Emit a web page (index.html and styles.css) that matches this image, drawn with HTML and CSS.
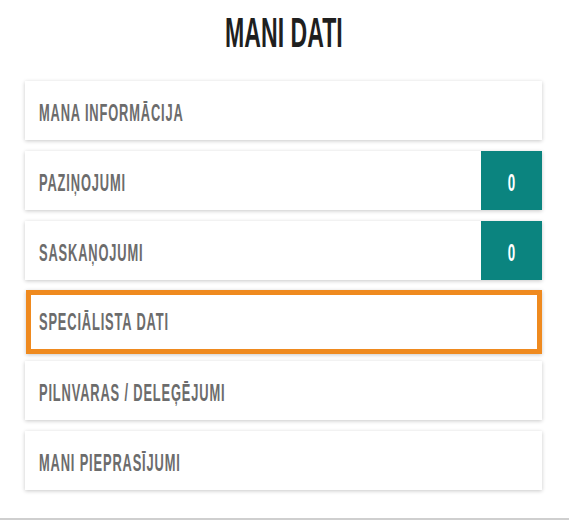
FILE: index.html
```html
<!DOCTYPE html>
<html lang="lv">
<head>
<meta charset="utf-8">
<title>Mani dati</title>
<link rel="stylesheet" href="styles.css">
</head>
<body>
<div class="page">
  <h1 class="title"><span class="squeeze">MANI DATI</span></h1>
  <ul class="menu">
    <li class="card"><span class="label"><span class="squeeze">MANA INFORMĀCIJA</span></span></li>
    <li class="card"><span class="label"><span class="squeeze">PAZIŅOJUMI</span></span><span class="badge"><span class="squeeze">0</span></span></li>
    <li class="card"><span class="label"><span class="squeeze">SASKAŅOJUMI</span></span><span class="badge"><span class="squeeze">0</span></span></li>
    <li class="card card-active"><span class="label"><span class="squeeze">SPECIĀLISTA DATI</span></span></li>
    <li class="card"><span class="label"><span class="squeeze">PILNVARAS / DELEĢĒJUMI</span></span></li>
    <li class="card"><span class="label"><span class="squeeze">MANI PIEPRASĪJUMI</span></span></li>
  </ul>
</div>
</body>
</html>
```

FILE: styles.css
```css
html, body {
  margin: 0;
  padding: 0;
  background: #fff;
}
body {
  font-family: "Liberation Sans Narrow", "Liberation Sans", "DejaVu Sans Condensed", sans-serif;
  font-weight: bold;
  height: 520px;
  box-sizing: border-box;
  border-bottom: 2px solid #cfcfcf;
  overflow: hidden;
}
.page {
  padding: 0 27px 0 25px;
}
.squeeze {
  display: inline-block;
  transform: scaleX(0.56);
  transform-origin: left center;
  white-space: nowrap;
}
.title {
  margin: 0;
  height: 81px;
  box-sizing: border-box;
  padding-top: 10px;
  text-align: center;
  font-size: 42px;
  line-height: 46px;
  color: #1f1f1f;
  font-weight: bold;
}
.title .squeeze {
  transform: scaleX(0.55);
  transform-origin: center center;
}
.menu {
  list-style: none;
  margin: 0;
  padding: 0;
  display: flex;
  flex-direction: column;
  gap: 11px;
}
.card {
  height: 59px;
  background: #fff;
  box-shadow: 0 1px 4px rgba(0, 0, 0, 0.22);
  display: flex;
  align-items: stretch;
  justify-content: space-between;
}
.card-active {
  height: 64px;
  margin: -1px 0 -4px 1px;
  border: 5px solid #ef8a1f;
  box-sizing: border-box;
}
.label {
  display: flex;
  align-items: center;
  padding: 5px 0 0 14px;
  font-size: 23px;
  color: #6c6c6c;
  letter-spacing: 1.5px;
}
.card-active .label {
  padding-left: 8px;
  padding-top: 1px;
}
.badge {
  width: 61px;
  background: #0b847f;
  color: #fff;
  font-size: 23px;
  display: flex;
  align-items: center;
  justify-content: center;
  padding-top: 5px;
  box-sizing: border-box;
}
.badge .squeeze {
  transform: scaleX(0.58);
  transform-origin: center center;
}
```
